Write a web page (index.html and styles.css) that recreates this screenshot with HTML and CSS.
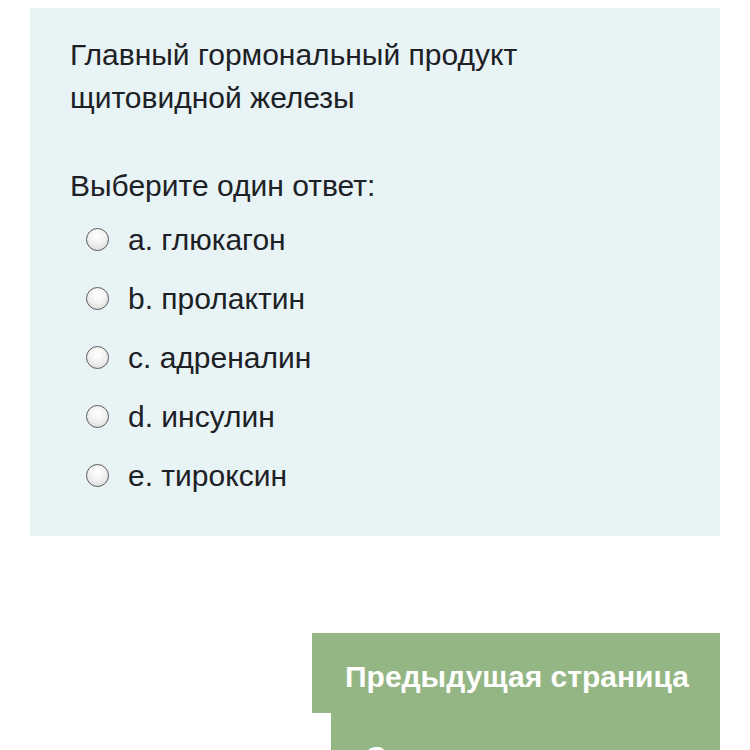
FILE: index.html
```html
<!DOCTYPE html>
<html lang="ru">
<head>
<meta charset="utf-8">
<link rel="stylesheet" href="styles.css">
</head>
<body>
<div class="card">
  <p class="question">Главный гормональный продукт<br>щитовидной железы</p>
  <p class="prompt">Выберите один ответ:</p>
  <div class="options">
    <label class="option"><span class="radio"></span><span>a. глюкагон</span></label>
    <label class="option"><span class="radio"></span><span>b. пролактин</span></label>
    <label class="option"><span class="radio"></span><span>c. адреналин</span></label>
    <label class="option"><span class="radio"></span><span>d. инсулин</span></label>
    <label class="option"><span class="radio"></span><span>e. тироксин</span></label>
  </div>
</div>
<div class="nav">
  <div class="btn btn-prev">Предыдущая страница</div>
  <div class="btn btn-next">Следующая страница</div>
</div>
</body>
</html>
```
FILE: styles.css
```css
html, body {
  margin: 0;
  padding: 0;
  background: #ffffff;
  font-family: "Liberation Sans", Arial, sans-serif;
  color: #1d2125;
  overflow: hidden;
}
.card {
  margin: 8px 0 0 30px;
  width: 690px;
  box-sizing: border-box;
  background: #e7f3f5;
  padding: 25px 40px 31px 40px;
  font-size: 30px;
  line-height: 43px;
}
.question {
  margin: 0;
}
.prompt {
  margin: 45px 0 0 0;
}
.options {
  margin-top: 3px;
  display: flex;
  flex-direction: column;
}
.option {
  display: flex;
  align-items: center;
  height: 59px;
  padding-left: 16px;
}
.radio {
  width: 21px;
  height: 21px;
  border: 1.5px solid #5a5a5a;
  border-radius: 50%;
  background: radial-gradient(circle at 50% 35%, #ffffff 0%, #f2f2f2 45%, #d4d4d4 100%);
  margin-right: 19px;
  flex: none;
}
.nav {
  margin-top: 97px;
  display: flex;
  flex-direction: column;
  align-items: flex-end;
  margin-right: 30px;
}
.btn {
  background: #93b684;
  color: #ffffff;
  font-weight: bold;
  font-size: 30px;
  line-height: 34px;
  height: 80px;
  padding-top: 27px;
  box-sizing: border-box;
  white-space: nowrap;
}
.btn-prev {
  width: 408px;
  padding-left: 33px;
}
.btn-next {
  width: 389px;
  padding-left: 34px;
}
```
